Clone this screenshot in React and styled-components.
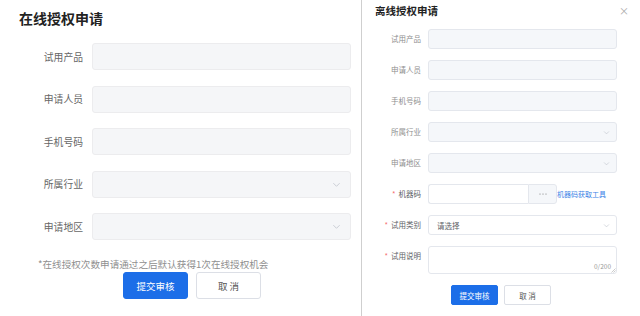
import React from 'react';
import styled, { createGlobalStyle } from 'styled-components';

const GlobalStyle = createGlobalStyle`
  html, body {
    margin: 0;
    padding: 0;
    background: #fff;
  }
  body {
    font-family: "Noto Sans CJK SC", "Noto Sans", sans-serif;
  }
  * {
    box-sizing: border-box;
  }
`;

const onlineFields = [
  { label: '试用产品' },
  { label: '申请人员' },
  { label: '手机号码' },
  { label: '所属行业', select: true },
  { label: '申请地区', select: true },
];

const offlineFields = [
  { label: '试用产品' },
  { label: '申请人员' },
  { label: '手机号码' },
  { label: '所属行业', select: true },
  { label: '申请地区', select: true },
];

function Chevron({ size = 8, color = '#c0c4cc' }) {
  return (
    <svg width={size} height={size} viewBox="0 0 10 10" fill="none">
      <path d="M1.5 3.5 L5 7 L8.5 3.5" stroke={color} strokeWidth="0.9" />
    </svg>
  );
}

function OnlineForm() {
  return (
    <LeftPanel>
      <BigTitle>在线授权申请</BigTitle>
      <BigForm>
        {onlineFields.map((f) => (
          <BigRow key={f.label}>
            <BigLabel>{f.label}</BigLabel>
            <BigInput>
              {f.select && <Chevron size={9} />}
            </BigInput>
          </BigRow>
        ))}
      </BigForm>
      <Note>*在线授权次数申请通过之后默认获得1次在线授权机会</Note>
      <BigActions>
        <BigButton primary>提交审核</BigButton>
        <BigButton>取 消</BigButton>
      </BigActions>
    </LeftPanel>
  );
}

function OfflineForm() {
  return (
    <RightPanel>
      <Header>
        <SmallTitle>离线授权申请</SmallTitle>
        <Close>×</Close>
      </Header>
      <SmallForm>
        {offlineFields.map((f) => (
          <SmallRow key={f.label}>
            <SmallLabel>{f.label}</SmallLabel>
            <SmallInput disabled>
              {f.select && <Chevron size={7} />}
            </SmallInput>
          </SmallRow>
        ))}
        <SmallRow>
          <SmallLabel required>机器码</SmallLabel>
          <CodeGroup>
            <CodeInput />
            <DotsButton>
              <svg width="8" height="2" viewBox="0 0 8 2">
                <circle cx="1" cy="1" r="0.6" fill="#777" />
                <circle cx="4" cy="1" r="0.6" fill="#777" />
                <circle cx="7" cy="1" r="0.6" fill="#777" />
              </svg>
            </DotsButton>
          </CodeGroup>
          <ToolLink>机器码获取工具</ToolLink>
        </SmallRow>
        <SmallRow>
          <SmallLabel required>试用类别</SmallLabel>
          <SmallInput>
            <Placeholder>请选择</Placeholder>
            <Chevron size={7} />
          </SmallInput>
        </SmallRow>
        <SmallRow>
          <SmallLabel required>试用说明</SmallLabel>
          <TextArea>
            <Counter>0/200</Counter>
            <Grip viewBox="0 0 6 6">
              <path d="M5.5 1.5 L1.5 5.5 M5.5 3.5 L3.5 5.5" stroke="#aaa" strokeWidth="0.6" />
            </Grip>
          </TextArea>
        </SmallRow>
      </SmallForm>
      <SmallActions>
        <SmallButton primary>提交审核</SmallButton>
        <SmallButton>取 消</SmallButton>
      </SmallActions>
    </RightPanel>
  );
}

export default function App() {
  return (
    <>
      <GlobalStyle />
      <Page>
        <OnlineForm />
        <OfflineForm />
      </Page>
    </>
  );
}

const Page = styled.div`
  display: flex;
  width: 640px;
  height: 316px;
  overflow: hidden;
  background: #fff;
`;

/* ---- left: online form ---- */

const LeftPanel = styled.div`
  width: 362px;
  flex: none;
  padding: 9px 10px 0 19px;
  border-right: 1px solid #cfcfcf;
  display: flex;
  flex-direction: column;
`;

const BigTitle = styled.h2`
  margin: 0;
  font-size: 14px;
  line-height: 18px;
  font-weight: 700;
  color: #222;
`;

const BigForm = styled.div`
  margin-top: 16px;
  display: flex;
  flex-direction: column;
  gap: 15.5px;
`;

const BigRow = styled.div`
  display: flex;
  align-items: center;
  gap: 9px;
`;

const BigLabel = styled.span`
  width: 64px;
  text-align: right;
  font-size: 9.8px;
  color: #666;
`;

const BigInput = styled.div`
  flex: 1;
  height: 27px;
  background: #f5f6f8;
  border: 1px solid #ececee;
  border-radius: 3px;
  display: flex;
  align-items: center;
  justify-content: flex-end;
  padding-right: 9px;
`;

const Note = styled.div`
  margin: 18px 0 0 19px;
  font-size: 9.6px;
  line-height: 13px;
  color: #8f8f8f;
  white-space: nowrap;
`;

const BigActions = styled.div`
  display: flex;
  gap: 8px;
  margin: 1px 0 0 104px;
`;

const BigButton = styled.button`
  width: 65px;
  height: 27px;
  padding: 0;
  font-family: inherit;
  font-size: 9.5px;
  border-radius: 3px;
  border: 1px solid ${(p) => (p.primary ? '#1c6ee8' : '#dcdfe6')};
  background: ${(p) => (p.primary ? '#1c6ee8' : '#fff')};
  color: ${(p) => (p.primary ? '#fff' : '#555')};
`;

/* ---- right: offline dialog ---- */

const RightPanel = styled.div`
  flex: 1;
  padding: 4px 23px 0 7px;
  display: flex;
  flex-direction: column;
`;

const Header = styled.div`
  display: flex;
  justify-content: space-between;
  align-items: center;
  padding-left: 6px;
  margin-right: -12px;
`;

const SmallTitle = styled.h3`
  margin: 0;
  font-size: 10.5px;
  line-height: 14px;
  font-weight: 700;
  color: #222;
`;

const Close = styled.span`
  font-size: 10px;
  line-height: 14px;
  color: #aaa;
`;

const SmallForm = styled.div`
  margin-top: 11px;
  display: flex;
  flex-direction: column;
  gap: 11px;
`;

const SmallRow = styled.div`
  display: flex;
  align-items: flex-start;
  gap: 7px;
`;

const SmallLabel = styled.span`
  width: 52px;
  flex: none;
  text-align: right;
  font-size: 7.5px;
  line-height: 20px;
  color: ${(p) => (p.required ? '#606266' : '#8e8e8e')};

  &::before {
    content: ${(p) => (p.required ? '"*"' : 'none')};
    color: #f56c6c;
    margin-right: 3px;
  }
`;

const SmallInput = styled.div`
  flex: 1;
  height: 20px;
  border-radius: 3px;
  border: 1px solid #e4e7ed;
  background: ${(p) => (p.disabled ? '#f5f7fa' : '#fff')};
  display: flex;
  align-items: center;
  justify-content: space-between;
  padding: 0 6px 0 8px;

  & > svg {
    margin-left: auto;
  }
`;

const Placeholder = styled.span`
  font-size: 7.5px;
  color: #606266;
`;

const CodeGroup = styled.div`
  display: flex;
  width: 129px;
  height: 20px;
`;

const CodeInput = styled.div`
  flex: 1;
  border: 1px solid #e4e7ed;
  border-right: none;
  border-radius: 3px 0 0 3px;
  background: #fff;
`;

const DotsButton = styled.div`
  width: 29px;
  border: 1px solid #e4e7ed;
  border-radius: 0 3px 3px 0;
  background: #f5f7fa;
  display: flex;
  align-items: center;
  justify-content: center;
`;

const ToolLink = styled.a`
  margin-left: -7px;
  font-size: 7px;
  line-height: 20px;
  color: #3b83e6;
  white-space: nowrap;
`;

const TextArea = styled.div`
  position: relative;
  flex: 1;
  height: 28px;
  border: 1px solid #e4e7ed;
  border-radius: 3px;
  background: #fff;
`;

const Counter = styled.span`
  position: absolute;
  right: 5px;
  bottom: 2px;
  font-size: 6.5px;
  color: #999;
`;

const Grip = styled.svg`
  position: absolute;
  right: 0;
  bottom: 0;
  width: 6px;
  height: 6px;
`;

const SmallActions = styled.div`
  display: flex;
  gap: 6px;
  margin: 11px 0 0 82px;
`;

const SmallButton = styled.button`
  width: 47px;
  height: 20px;
  padding: 0;
  font-family: inherit;
  font-size: 7.5px;
  border-radius: 2px;
  border: 1px solid ${(p) => (p.primary ? '#1c6ee8' : '#dcdfe6')};
  background: ${(p) => (p.primary ? '#1c6ee8' : '#fff')};
  color: ${(p) => (p.primary ? '#fff' : '#555')};
`;
